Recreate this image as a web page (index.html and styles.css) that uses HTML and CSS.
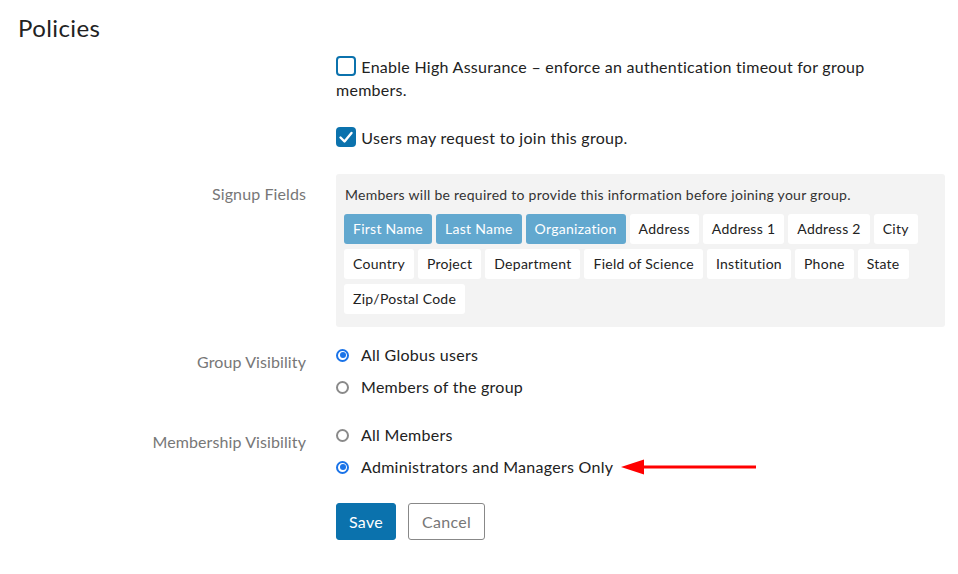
FILE: index.html
```html
<!DOCTYPE html>
<html>
<head>
<meta charset="utf-8">
<link rel="stylesheet" href="styles.css">
</head>
<body>
<h1 class="title">Policies</h1>
<div class="form">
  <div class="label"></div>
  <div class="field row1">
    <span class="cb"></span> Enable High Assurance – enforce an authentication timeout for group members.
  </div>

  <div class="label"></div>
  <div class="field row2">
    <span class="cb checked"><svg viewBox="0 0 20 20" width="20" height="20"><path d="M4.5 10.5 L8.5 14.5 L15.5 6" fill="none" stroke="#fff" stroke-width="2.4" stroke-linecap="round" stroke-linejoin="round"/></svg></span> Users may request to join this group.
  </div>

  <div class="label lbl-signup">Signup Fields</div>
  <div class="field signup">
    <div class="box">
      <div class="box-text">Members will be required to provide this information before joining your group.</div>
      <div class="tags">
        <span class="tag on">First Name</span>
        <span class="tag on">Last Name</span>
        <span class="tag on">Organization</span>
        <span class="tag">Address</span>
        <span class="tag">Address 1</span>
        <span class="tag">Address 2</span>
        <span class="tag">City</span>
        <span class="tag">Country</span>
        <span class="tag">Project</span>
        <span class="tag">Department</span>
        <span class="tag">Field of Science</span>
        <span class="tag">Institution</span>
        <span class="tag">Phone</span>
        <span class="tag">State</span>
        <span class="tag">Zip/Postal Code</span>
      </div>
    </div>
  </div>

  <div class="label lbl-radio lbl-gv">Group Visibility</div>
  <div class="field radios gv">
    <div class="opt"><span class="rd on"></span>All Globus users</div>
    <div class="opt"><span class="rd"></span>Members of the group</div>
  </div>

  <div class="label lbl-radio lbl-mv">Membership Visibility</div>
  <div class="field radios mv">
    <div class="opt"><span class="rd"></span>All Members</div>
    <div class="opt"><span class="rd on"></span>Administrators and Managers Only<svg class="arrow" width="136" height="16" viewBox="0 0 136 16"><path d="M22 8 L135 8" stroke="#f00" stroke-width="3"/><path d="M0 8 L23 0.5 L23 15.5 Z" fill="#f00"/></svg></div>
  </div>

  <div class="label"></div>
  <div class="field buttons">
    <button class="btn save">Save</button>
    <button class="btn cancel">Cancel</button>
  </div>
</div>
</body>
</html>
```

FILE: styles.css
```css
html, body {
  margin: 0;
  padding: 0;
  background: #fff;
}
body {
  font-family: Lato, "Open Sans", sans-serif;
  color: #222;
  width: 958px;
  letter-spacing: 0.27px;
}
.title {
  margin: 0;
  padding: 14px 0 0 18px;
  font-size: 24px;
  line-height: 28px;
  font-weight: 400;
  color: #222;
  letter-spacing: 0.4px;
}
.form {
  display: grid;
  grid-template-columns: 306px 609px;
  column-gap: 30px;
}
.label {
  text-align: right;
  color: #777;
  font-size: 16px;
  line-height: 23px;
  letter-spacing: 0.1px;
}
.field {
  font-size: 16px;
  line-height: 23px;
}
.row1 {
  margin-top: 13px;
  padding-right: 40px;
}
.row2 { margin-top: 25px; }
.cb {
  display: inline-block;
  width: 20px;
  height: 20px;
  box-sizing: border-box;
  border: 2px solid #0b72ad;
  border-radius: 4px;
  vertical-align: -3px;
  margin-right: 1px;
}
.cb.checked {
  background: #0b72ad;
  border: none;
}
.cb svg { display: block; }
.signup, .lbl-signup { margin-top: 25px; }
.lbl-signup { padding-top: 8px; }
.box {
  background: #f3f3f3;
  border-radius: 3px;
  padding: 11px 8px 13px 8px;
}
.box-text {
  font-size: 14px;
  line-height: 20px;
  color: #333;
  padding-left: 1px;
}
.tags {
  margin-top: 9px;
  display: flex;
  flex-wrap: wrap;
  gap: 5px 4px;
}
.tag {
  background: #fff;
  height: 30px;
  line-height: 30px;
  padding: 0 9px;
  border-radius: 3px;
  font-size: 14px;
  color: #222;
}
.tag.on {
  background: #62a8cf;
  color: #fff;
}
.gv, .lbl-gv { margin-top: 12px; }
.mv, .lbl-mv { margin-top: 16px; }
.lbl-radio { padding-top: 11px; }
.opt {
  height: 32px;
  line-height: 32px;
  display: flex;
  align-items: center;
}
.rd {
  width: 13px;
  height: 13px;
  box-sizing: border-box;
  border: 2px solid #8a8a8a;
  border-radius: 50%;
  margin-right: 12px;
  position: relative;
  flex: none;
}
.rd.on {
  border-color: #1a73e8;
}
.rd.on::after {
  content: "";
  position: absolute;
  left: 1.5px;
  top: 1.5px;
  width: 6px;
  height: 6px;
  border-radius: 50%;
  background: #1a73e8;
}
.arrow {
  margin-left: 8px;
  flex: none;
}
.buttons {
  margin-top: 20px;
  display: flex;
  gap: 12px;
}
.btn {
  font-family: inherit;
  font-size: 16px;
  letter-spacing: 0.27px;
  height: 37px;
  border-radius: 3px;
  padding: 0;
  cursor: pointer;
}
.save {
  background: #0b72ad;
  color: #fff;
  border: 1px solid #0b72ad;
  width: 60px;
}
.cancel {
  background: #fff;
  color: #777;
  border: 1px solid #888;
  width: 77px;
}
```
